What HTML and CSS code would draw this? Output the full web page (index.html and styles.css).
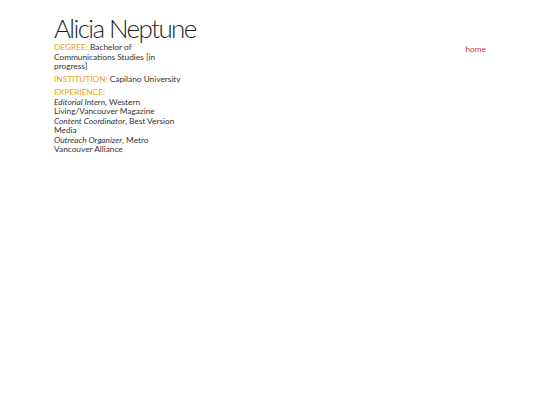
FILE: index.html
```
<!DOCTYPE html>
<html>
<head>
<meta charset="utf-8">
<link rel="stylesheet" href="styles.css">
</head>
<body>
<div class="page">
  <div class="main">
    <h1 class="name">Alicia Neptune</h1>
    <div class="info">
      <p class="item"><span class="label">DEGREE:</span> Bachelor of Communications Studies [in progress]</p>
      <p class="item"><span class="label">INSTITUTION:</span> Capilano University</p>
      <p class="item"><span class="label">EXPERIENCE:</span><br>
        <em>Editorial Intern</em>, Western Living/Vancouver Magazine<br>
        <em>Content Coordinator</em>, Best Version Media<br>
        <em>Outreach Organizer</em>, Metro Vancouver Alliance</p>
    </div>
  </div>
  <nav class="nav"><a class="home" href="#">home</a></nav>
</div>
</body>
</html>
```
FILE: styles.css
```
html, body {
  margin: 0;
  padding: 0;
  background: #ffffff;
}
body {
  font-family: "Lato", "DejaVu Sans", sans-serif;
  color: #333333;
}
.page {
  width: 432px;
  margin: 0 auto;
  padding-top: 13px;
  display: flex;
  justify-content: space-between;
  align-items: flex-start;
}
.main {
  width: 132px;
}
.name {
  margin: 0;
  font-family: "Lato", sans-serif;
  font-weight: 300;
  font-size: 26px;
  line-height: 30px;
  white-space: nowrap;
  color: #1e1e1e;
  letter-spacing: -1.6px;
}
.info {
  margin-top: 0;
  font-size: 8.3px;
  line-height: 9.5px;
}
.item {
  margin: 0 0 3.6px 0;
}
.label {
  color: #eba219;
}
.nav {
  padding-top: 31px;
  font-size: 8.3px;
}
.home {
  color: #c9414a;
  text-decoration: none;
}
```
